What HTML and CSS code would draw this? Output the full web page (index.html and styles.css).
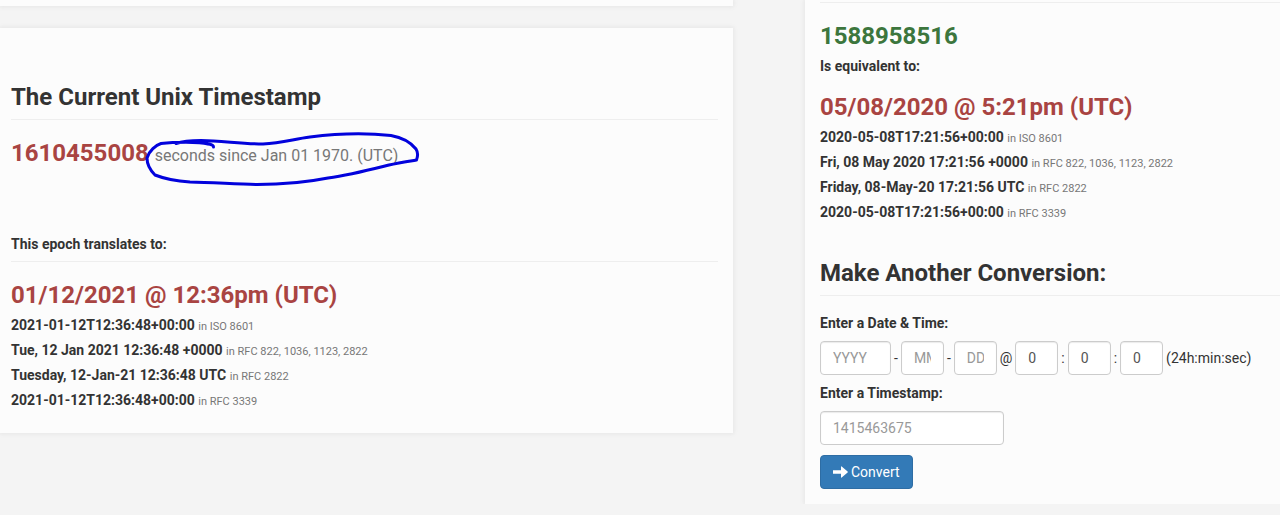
FILE: index.html
```html
<!DOCTYPE html>
<html lang="en">
<head>
<meta charset="utf-8">
<meta name="viewport" content="width=device-width, initial-scale=1">
<title>Unix Timestamp Converter</title>
<link rel="stylesheet" href="styles.css">
</head>
<body>
<main class="layout">
  <div class="column">
    <div class="card card-stub"></div>
    <section class="card card-current">
      <h1 class="title ruled">The Current Unix Timestamp</h1>
      <div class="title danger epoch">1610455008 <small class="unit">seconds since Jan 01 1970. (UTC)</small>
        <svg class="scribble" viewBox="140 125 285 65" fill="none" stroke="#0202dc" stroke-width="3" stroke-linecap="round" stroke-linejoin="round" aria-hidden="true">
          <path d="M176 143.500C183 141 190 140.500 201 140.500C221 140.500 241 144 263 144C282 143 294 139 310 137C337 133.500 369 133 391 135.500C405 138 412 144 416 149C418.500 153 418 156 416.500 160C407 161.500 397 163 389 165C369 170 350 175 328 178C303 183 281 184.500 257 184.500C236 184 212 182.500 190 182C176 181 165 179 155 175C149 169 147 164 147 158C149 151 156 145 161 143.500C174 142 199 141.500 208 144C212 144.500 213.500 145 213.500 147"/>
        </svg>
      </div>
      <h2 class="caption ruled caption-epoch">This epoch translates to:</h2>
      <div class="title danger date">01/12/2021 @ 12:36pm (UTC)</div>
      <ul class="formats">
        <li>2021-01-12T12:36:48+00:00 <small>in ISO 8601</small></li>
        <li>Tue, 12 Jan 2021 12:36:48 +0000 <small>in RFC 822, 1036, 1123, 2822</small></li>
        <li>Tuesday, 12-Jan-21 12:36:48 UTC <small>in RFC 2822</small></li>
        <li>2021-01-12T12:36:48+00:00 <small>in RFC 3339</small></li>
      </ul>
    </section>
  </div>
  <section class="card card-convert">
    <hr class="rule">
    <div class="title success">1588958516</div>
    <div class="equivalent">Is equivalent to:</div>
    <div class="title danger">05/08/2020 @ 5:21pm (UTC)</div>
    <ul class="formats">
      <li>2020-05-08T17:21:56+00:00 <small>in ISO 8601</small></li>
      <li>Fri, 08 May 2020 17:21:56 +0000 <small>in RFC 822, 1036, 1123, 2822</small></li>
      <li>Friday, 08-May-20 17:21:56 UTC <small>in RFC 2822</small></li>
      <li>2020-05-08T17:21:56+00:00 <small>in RFC 3339</small></li>
    </ul>
    <h2 class="title ruled another">Make Another Conversion:</h2>
    <form class="form">
      <label class="caption" for="year">Enter a Date &amp; Time:</label>
      <div class="datetime">
        <input class="field year" id="year" type="text" placeholder="YYYY">
        <span>-</span>
        <input class="field part" type="text" placeholder="MM" aria-label="Month">
        <span>-</span>
        <input class="field part" type="text" placeholder="DD" aria-label="Day">
        <span>@</span>
        <input class="field part" type="text" value="0" aria-label="Hour">
        <span>:</span>
        <input class="field part" type="text" value="0" aria-label="Minute">
        <span>:</span>
        <input class="field part" type="text" value="0" aria-label="Second">
        <span>(24h:min:sec)</span>
      </div>
      <label class="caption" for="stamp">Enter a Timestamp:</label>
      <input class="field stamp" id="stamp" type="text" placeholder="1415463675">
      <button class="convert" type="button">
        <svg class="arrow" viewBox="0 0 15 12" aria-hidden="true"><path fill="#fff" d="M0 4.200h8V0.800q0-.8.700-.3L14.600 5.500q.5.500 0 1L8.700 11.500q-.7.500-.7-.3V7.800H0z"/></svg>
        Convert
      </button>
    </form>
  </section>
</main>
</body>
</html>
```
FILE: styles.css
```css
* {
  box-sizing: border-box;
}

body {
  margin: 0;
  background: #f4f4f4;
  color: #333;
  font-family: Roboto, Arial, sans-serif;
  font-size: 14px;
  line-height: 25px;
}

.layout {
  display: grid;
  grid-template-columns: 733fr 475fr;
  align-items: start;
  gap: 72px;
}

.column {
  display: flex;
  flex-direction: column;
  gap: 22px;
}

.card {
  background: #fcfcfc;
  box-shadow: 0 0 4px 1px #e6e6e6;
}

.card-stub {
  height: 6px;
}

.card-current {
  padding: 56px 15px 20px 11px;
}

.card-convert {
  padding: 2px 0 15px 15px;
}

.title {
  margin: 0;
  font-size: 24px;
  line-height: 26px;
  font-weight: 700;
}

.ruled {
  padding-bottom: 9px;
  border-bottom: 1px solid #eee;
}

.danger {
  color: #a94442;
}

.success {
  color: #3c763d;
}

.epoch {
  position: relative;
  margin-top: 20px;
}

.unit {
  color: #777;
  font-size: 16px;
  line-height: 16px;
  font-weight: 400;
}

.scribble {
  position: absolute;
  top: -15px;
  left: 129px;
  width: 285px;
  height: 65px;
}

.caption {
  margin: 0;
  font-size: 14px;
  line-height: 20px;
  font-weight: 700;
}

.caption-epoch {
  margin-top: 68px;
  padding-bottom: 7px;
}

.date {
  margin-top: 20px;
}

.formats {
  margin: 5px 0 0;
  padding: 0;
  list-style: none;
  font-weight: 700;
}

.formats small {
  color: #777;
  font-size: 11px;
  line-height: 11px;
  font-weight: 400;
}

.rule {
  margin: 0 0 20px;
  border: 0;
  border-top: 1px solid #eee;
}

.equivalent {
  margin: 5px 0 15px;
  font-weight: 700;
}

.another {
  margin-top: 35px;
}

.form {
  display: flex;
  flex-direction: column;
  align-items: flex-start;
  gap: 8px;
  margin-top: 17px;
}

.datetime {
  display: flex;
  align-items: center;
  gap: 3px;
  white-space: nowrap;
}

.field {
  height: 34px;
  padding: 6px 12px;
  border: 1px solid #ccc;
  border-radius: 4px;
  background: #fff;
  box-shadow: inset 0 1px 1px #ececec;
  color: #555;
  font-family: inherit;
  font-size: 14px;
}

.field::placeholder {
  color: #999;
}

.year {
  width: 71px;
}

.part {
  width: 43px;
}

.stamp {
  width: 184px;
}

.convert {
  display: flex;
  align-items: center;
  gap: 3px;
  height: 34px;
  margin-top: 2px;
  padding: 0 12px;
  border: 1px solid #2e6da4;
  border-radius: 4px;
  background: #337ab7;
  color: #fff;
  font-family: inherit;
  font-size: 14px;
}

.arrow {
  width: 15px;
  height: 12px;
}
```
